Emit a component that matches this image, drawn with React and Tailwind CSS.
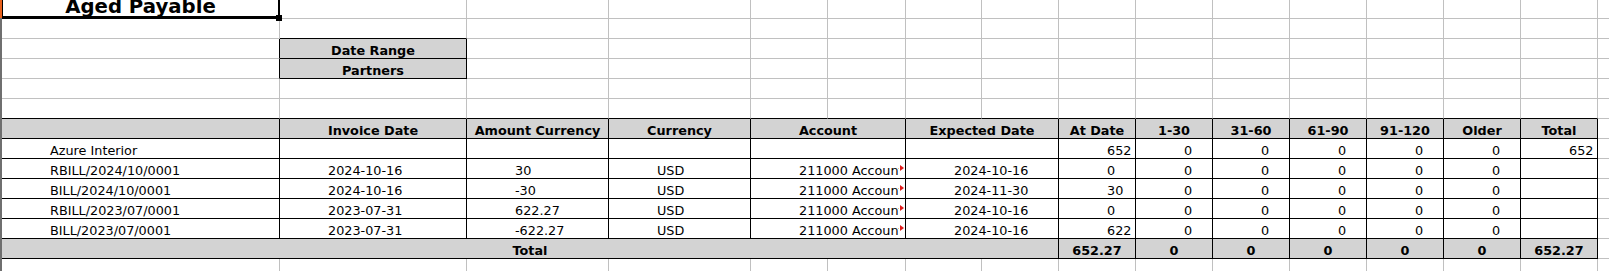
import React from "react";
import clsx from "clsx";

const rightColor = { g: "border-r-[#c0c0c0]", k: "border-r-black" };
const bottomColor = { g: "border-b-[#c0c0c0]", k: "border-b-black" };
const spans = { 1: "", 2: "col-span-2", 8: "col-span-8" };

const blanks = (n, opts = {}) => Array.from({ length: n }, () => ({ ...opts }));

const box = { r: "k", b: "k" };
const head = (text, span = 1) => ({ text, span, align: "c", bold: true, gray: true, ...box });
const val = (text, span = 1, clip = false) => ({ text, span, clip, ...box });
const tot = (text, span = 1) => ({ text, span, align: "c", bold: true, gray: true, ...box });

const lines = [
  ["Azure Interior", "", "", "", "", "", "652", "0", "0", "0", "0", "0", "652"],
  ["RBILL/2024/10/0001", "2024-10-16", "30", "USD", "211000 Account Payable", "2024-10-16", "0", "0", "0", "0", "0", "0", ""],
  ["BILL/2024/10/0001", "2024-10-16", "-30", "USD", "211000 Account Payable", "2024-11-30", "30", "0", "0", "0", "0", "0", ""],
  ["RBILL/2023/07/0001", "2023-07-31", "622.27", "USD", "211000 Account Payable", "2024-10-16", "0", "0", "0", "0", "0", "0", ""],
  ["BILL/2023/07/0001", "2023-07-31", "-622.27", "USD", "211000 Account Payable", "2024-10-16", "622", "0", "0", "0", "0", "0", ""],
];

const dataRow = (l) => [
  val(l[0]),
  val(l[1]),
  val(l[2]),
  val(l[3]),
  val(l[4], 2, l[4] !== ""),
  val(l[5], 2),
  ...l.slice(6).map((t) => val(t)),
  {},
];

const rows = [
  [{}, { b: "k" }, ...blanks(14)],
  [{ r: "k" }, head("Date Range"), ...blanks(14)],
  [{ r: "k" }, head("Partners"), ...blanks(14)],
  blanks(16),
  [...blanks(15, { b: "k" }), {}],
  [
    { gray: true, ...box },
    head("Invoice Date"),
    head("Amount Currency"),
    head("Currency"),
    head("Account", 2),
    head("Expected Date", 2),
    head("At Date"),
    head("1-30"),
    head("31-60"),
    head("61-90"),
    head("91-120"),
    head("Older"),
    head("Total"),
    {},
  ],
  ...lines.map(dataRow),
  [tot("Total", 8), tot("652.27"), tot("0"), tot("0"), tot("0"), tot("0"), tot("0"), tot("652.27"), {}],
  blanks(16),
];

const Cell = ({ text = "", span = 1, align = "l", bold = false, gray = false, r = "g", b = "g", clip = false }) => (
  <div
    className={clsx(
      "relative whitespace-nowrap border-r border-b pt-[4px] leading-[15px]",
      spans[span],
      rightColor[r],
      bottomColor[b],
      gray && "bg-[#d3d3d3]",
      bold && "font-bold",
      align === "c" ? "text-center" : "pl-[48px]",
      clip ? "pr-[6px]" : "overflow-hidden"
    )}
  >
    {clip ? <div className="overflow-hidden">{text}</div> : text}
    {clip && (
      <span className="absolute top-[6px] right-[1px] h-0 w-0 border-y-[3px] border-l-[4px] border-y-transparent border-l-[#e01b1b]" />
    )}
  </div>
);

const App = () => {
  return (
    <div className="flex h-[271px] w-[1609px] overflow-hidden bg-white font-['DejaVu_Sans',sans-serif] text-[12.8px] text-black">
      <div className="flex w-[2px] shrink-0 flex-col">
        <div className="h-[18px] bg-[#e8601c]" />
        <div className="flex-1 bg-[#6f6f6f]" />
      </div>
      <div className="grid shrink-0 grid-cols-[278px_187px_142px_142px_77px_78px_76px_77px_77px_77px_77px_77px_77px_77px_77px_77px] grid-rows-[19px_repeat(13,20px)]">
        <div className="relative flex justify-center border-b-[3px] border-l border-r-2 border-black">
          <span className="-mt-[3px] text-[19.7px] leading-[19.7px] font-bold">Aged Payable</span>
          <span className="absolute -right-[4px] -bottom-[5px] z-10 h-[6px] w-[6px] bg-black" />
        </div>
        {blanks(15).map((c, i) => (
          <Cell key={`t${i}`} {...c} />
        ))}
        {rows.map((row, ri) => row.map((c, ci) => <Cell key={`${ri}-${ci}`} {...c} />))}
      </div>
    </div>
  );
};

export default App;
